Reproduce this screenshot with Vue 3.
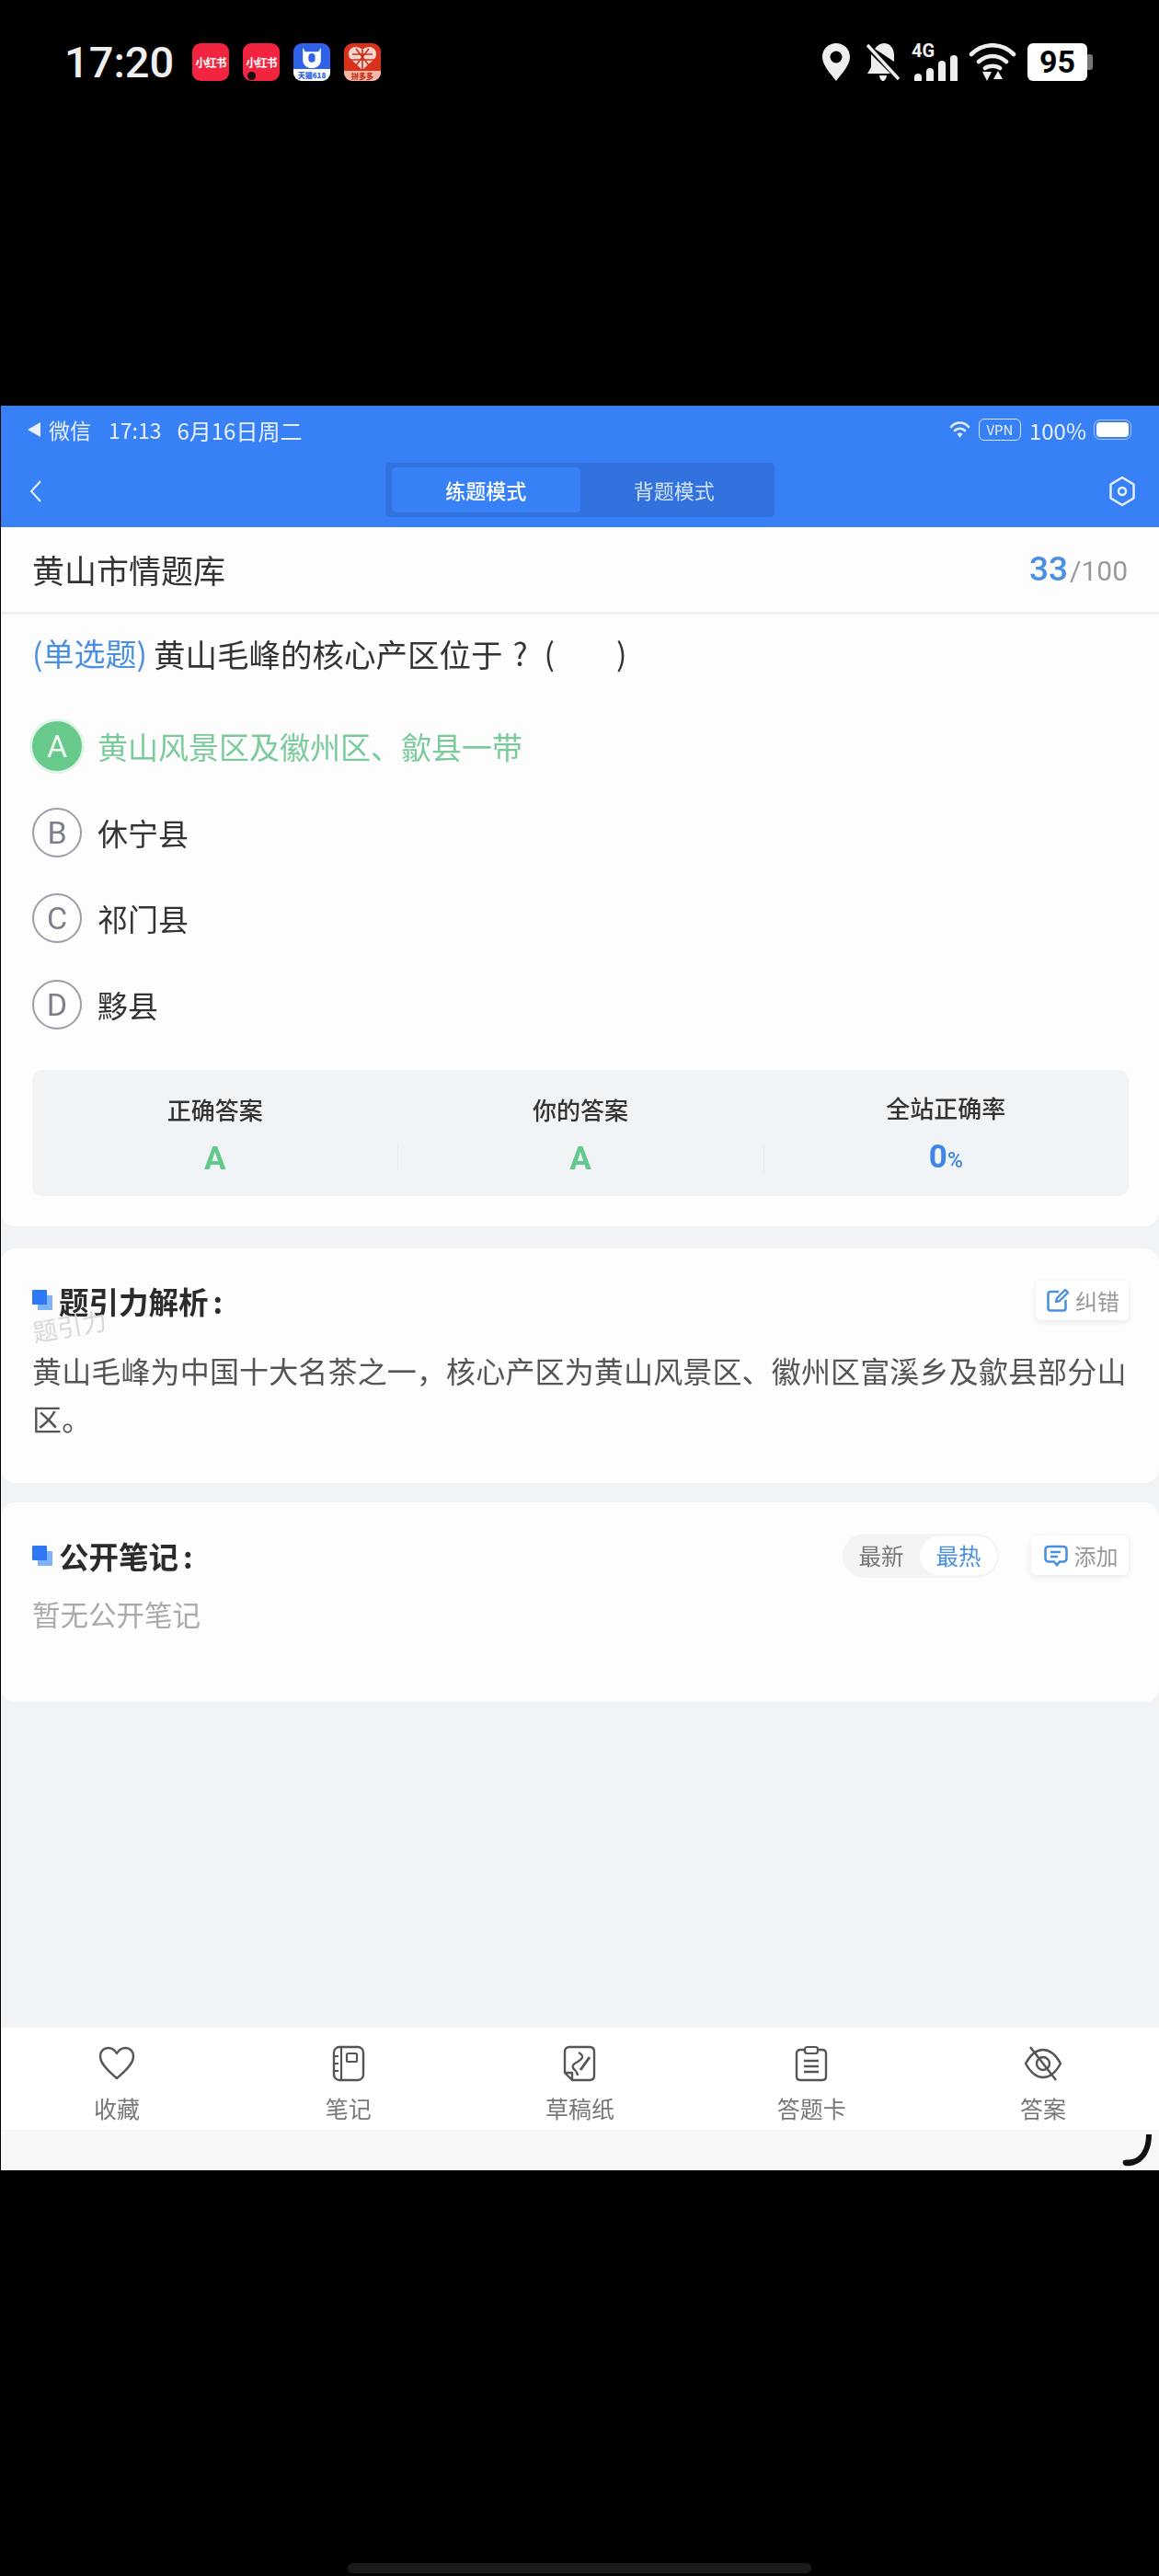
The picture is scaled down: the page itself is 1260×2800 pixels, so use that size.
<script setup>
const options = [
  { key: 'A', text: '黄山风景区及徽州区、歙县一带', right: true },
  { key: 'B', text: '休宁县' },
  { key: 'C', text: '祁门县' },
  { key: 'D', text: '黟县' },
]
</script>

<template>
  <div class="page">
    <!-- phone status bar -->
    <div class="phone-bar">
      <span class="phone-time">17:20</span>
      <div class="app-icon app-icon--red"><span>小红书</span></div>
      <div class="app-icon app-icon--red">
        <span>小红书</span>
        <i class="app-dot"></i>
      </div>
      <div class="app-icon app-icon--blue">
        <svg width="40" height="28" viewBox="0 0 40 28">
          <path d="M9 2 L12 7 H28 L31 2 V17 C31 23 26 27 20 27 C14 27 9 23 9 17Z" fill="#fff" />
          <rect x="16" y="9" width="8" height="11" rx="4" fill="#2f62e8" />
        </svg>
        <b>天猫618</b>
      </div>
      <div class="app-icon app-icon--pdd">
        <svg width="32" height="27" viewBox="0 0 32 27">
          <path d="M16 26 L3 14 C-1 9 1 2 8 1 C11 1 14 2 16 4 C18 2 21 1 24 1 C31 2 33 9 29 14Z" fill="#f6d6cc" />
          <path d="M16 4 V26 M5 9 L27 9 M3 15 L29 15 M9 3 L23 21 M23 3 L9 21" stroke="#c9301c" stroke-width="1.6" fill="none" />
        </svg>
        <b>拼多多</b>
      </div>

      <div class="phone-right">
        <svg width="30" height="41" viewBox="0 0 30 41">
          <path fill-rule="evenodd" fill="#eee" d="M15 0 C23.5 0 30 6.5 30 15 C30 24 21 33 15 41 C9 33 0 24 0 15 C0 6.5 6.5 0 15 0Z M15 8.5 A6.5 6.5 0 1 0 15 21.5 A6.5 6.5 0 1 0 15 8.5Z" />
        </svg>
        <svg class="ic-bell" width="38" height="41" viewBox="0 0 38 41">
          <path fill="#eee" d="M10 6 C13 2 16 0 20 0 C27 0 31 6 31 13 V20 Z M6 12 L27 33 H2 L6 26Z M15 35 H23 C22.5 38.5 21 41 19 41 C17 41 15.5 38.5 15 35Z" />
          <path stroke="#eee" stroke-width="3.4" d="M2 2 L36 39" />
        </svg>
        <div class="signal">
          <span class="signal-4g">4G</span>
          <div class="signal-bars">
            <i style="height: 8px"></i><i style="height: 14px"></i><i style="height: 22px"></i><i style="height: 28px"></i>
          </div>
        </div>
        <svg width="52" height="41" viewBox="0 0 52 41">
          <path d="M3 12 C16 -1 36 -1 49 12 M11 20 C20 12 32 12 41 20 M18 27 C22 24 30 24 34 27" fill="none" stroke="#eee" stroke-width="4.6" stroke-linecap="round" />
          <path d="M15 31 H25 L20 41Z M32 30 L37 39 H27Z" fill="#eee" />
        </svg>
        <div class="battery"><span>95</span></div>
      </div>
    </div>

    <div class="screen">
      <div class="top-blue">
        <div class="wx-bar">
          <span class="wx-back"></span>
          <span class="wx-name">微信</span>
          <span class="wx-time">17:13</span>
          <span class="wx-date">6月16日周二</span>
          <div class="wx-right">
            <svg width="23" height="20" viewBox="0 0 23 20">
              <path d="M2 7 C7 1 16 1 21 7 M6 11 C9 8 14 8 17 11" fill="none" stroke="#e6eefc" stroke-width="2.6" stroke-linecap="round" />
              <path d="M8.5 14.5 C10.5 13 12.5 13 14.5 14.5 L11.5 19Z" fill="#e6eefc" />
            </svg>
            <span class="vpn">VPN</span>
            <span class="wx-batt-text">100%</span>
            <span class="wx-batt"><i></i></span>
          </div>
        </div>
        <div class="nav-bar">
          <svg class="nav-back" width="14" height="24" viewBox="0 0 14 24">
            <path d="M12 1 L2 12 L12 23" fill="none" stroke="#e8f0fe" stroke-width="2" />
          </svg>
          <div class="mode-switch">
            <span class="mode-item mode-item--on">练题模式</span>
            <span class="mode-item">背题模式</span>
          </div>
          <svg class="nav-set" width="30" height="34" viewBox="0 0 30 34">
            <path d="M15 2 L27.5 9.5 V24.5 L15 32 L2.5 24.5 V9.5Z" fill="none" stroke="#e8f0fe" stroke-width="2.4" stroke-linejoin="round" />
            <circle cx="15" cy="17" r="4" fill="none" stroke="#e8f0fe" stroke-width="2.4" />
          </svg>
        </div>
      </div>

      <div class="subject">
        <span class="subject-name">黄山市情题库</span>
        <span class="subject-count"><b>33</b>/100</span>
      </div>

      <section class="card card--question">
        <p class="question">
          <span class="question-type">(单选题)</span>
          <span class="question-text">黄山毛峰的核心产区位于</span>
          <span class="question-mark">?</span>
          <span class="question-blank">(</span>
          <span class="question-end">)</span>
        </p>
        <div class="options">
          <div v-for="o in options" :key="o.key" class="option" :class="{ 'option--right': o.right }">
            <span class="option-key">{{ o.key }}</span>
            <span class="option-text">{{ o.text }}</span>
          </div>
        </div>
        <div class="stats">
          <div class="stat">
            <span class="stat-label">正确答案</span>
            <span class="stat-value stat-value--green">A</span>
          </div>
          <div class="stat stat--line">
            <span class="stat-label">你的答案</span>
            <span class="stat-value stat-value--green">A</span>
          </div>
          <div class="stat stat--line">
            <span class="stat-label">全站正确率</span>
            <span class="stat-value stat-value--blue">0<small>%</small></span>
          </div>
        </div>
      </section>

      <section class="card card--analysis">
        <div class="card-head card-head--a">
          <h3 class="card-title"><i class="title-mark"></i>题引力解析<span class="title-colon">:</span></h3>
          <button class="mini-btn">
            <svg width="24" height="26" viewBox="0 0 24 26">
              <path d="M13 4 H4 C2.5 4 1.5 5 1.5 6.5 V22 C1.5 23.5 2.5 24.5 4 24.5 H18 C19.5 24.5 20.5 23.5 20.5 22 V13" fill="none" stroke="#4a90e2" stroke-width="2.6" />
              <path d="M10 15 L11 11 L20 2 L23 5 L14 14Z" fill="none" stroke="#4a90e2" stroke-width="2.4" stroke-linejoin="round" />
            </svg>
            纠错
          </button>
        </div>
        <span class="watermark">题引力</span>
        <p class="analysis">黄山毛峰为中国十大名茶之一，核心产区为黄山风景区、徽州区富溪乡及歙县部分山区。</p>
      </section>

      <section class="card card--notes">
        <div class="card-head card-head--b">
          <h3 class="card-title"><i class="title-mark"></i>公开笔记<span class="title-colon">:</span></h3>
          <div class="sort">
            <span class="sort-item">最新</span>
            <span class="sort-item sort-item--on">最热</span>
          </div>
          <button class="mini-btn mini-btn--add">
            <svg width="26" height="24" viewBox="0 0 26 24">
              <path d="M5 2 H21 C23 2 24.5 3.5 24.5 5.5 V15 C24.5 17 23 18.5 21 18.5 H17 L14 22 L11 18.5 H5 C3 18.5 1.5 17 1.5 15 V5.5 C1.5 3.5 3 2 5 2Z" fill="none" stroke="#4a90e2" stroke-width="2.6" />
              <path d="M7 8 H18 M7 13 H15" stroke="#4a90e2" stroke-width="2.4" />
            </svg>
            添加
          </button>
        </div>
        <p class="no-notes">暂无公开笔记</p>
      </section>

      <div class="filler"></div>

      <div class="tabs">
        <div class="tab">
          <svg width="40" height="38" viewBox="0 0 40 38">
            <path d="M20 35 C8 25 2 18 2 11 C2 5.5 6 2 10.5 2 C14.5 2 18 4.5 20 8 C22 4.5 25.5 2 29.5 2 C34 2 38 5.5 38 11 C38 18 32 25 20 35Z" fill="none" stroke="#555" stroke-width="2.4" stroke-linejoin="round" />
          </svg>
          <span>收藏</span>
        </div>
        <div class="tab">
          <svg width="36" height="40" viewBox="0 0 36 40">
            <rect x="2" y="2" width="32" height="36" rx="6" fill="none" stroke="#555" stroke-width="2.4" />
            <path d="M10 3 V37 M2 12 H7 M2 20 H7 M2 28 H7" fill="none" stroke="#555" stroke-width="2.2" />
            <rect x="16" y="9" width="11" height="9" rx="1.5" fill="none" stroke="#555" stroke-width="2.2" />
          </svg>
          <span>笔记</span>
        </div>
        <div class="tab">
          <svg width="36" height="40" viewBox="0 0 36 40">
            <path d="M7 2 H29 C32 2 34 4 34 7 V33 C34 36 32 38 29 38 H10 L2 30 V7 C2 4 4 2 7 2Z M2 30 H10 V38" fill="none" stroke="#555" stroke-width="2.4" stroke-linejoin="round" />
            <path d="M17 8 C24 12 21 15 16 18 C10 21 9 24 13 27 C15 29 16 30 16 33" fill="none" stroke="#555" stroke-width="2.2" />
            <path d="M19 27 L29 13" fill="none" stroke="#555" stroke-width="3" />
          </svg>
          <span>草稿纸</span>
        </div>
        <div class="tab">
          <svg width="36" height="40" viewBox="0 0 36 40">
            <path d="M11 5 H6 C3.5 5 2 6.5 2 9 V34 C2 36.5 3.5 38 6 38 H30 C32.5 38 34 36.5 34 34 V9 C34 6.5 32.5 5 30 5 H25" fill="none" stroke="#555" stroke-width="2.4" />
            <rect x="11" y="2" width="14" height="7" rx="2.5" fill="none" stroke="#555" stroke-width="2.2" />
            <path d="M10 17 H26 M10 23 H26 M10 29 H26" stroke="#555" stroke-width="2.4" />
          </svg>
          <span>答题卡</span>
        </div>
        <div class="tab">
          <svg width="44" height="40" viewBox="0 0 44 40">
            <path d="M3 20 C9 9 15 5 22 5 C29 5 35 9 41 20 C35 31 29 35 22 35 C15 35 9 31 3 20Z" fill="none" stroke="#555" stroke-width="2.4" />
            <circle cx="22" cy="20" r="7" fill="none" stroke="#555" stroke-width="2.4" />
            <path d="M8 2 L36 38" stroke="#555" stroke-width="2.4" />
          </svg>
          <span>答案</span>
        </div>
      </div>
      <div class="tabs-foot">
        <svg class="foot-mark" width="34" height="36" viewBox="0 0 34 36">
          <path d="M27 1 C27 12 24 22 15 27 C10 29 6 28 3 29 C1 30 1 34 4 35 C16 37 33 28 33 1Z" fill="#111" />
        </svg>
      </div>
    </div>

    <div class="home-bar"></div>
  </div>
</template>

<style scoped>
.page {
  height: 2800px;
  background: #000;
  display: flex;
  flex-direction: column;
  font-family: "Noto Sans CJK SC", "Noto Sans", sans-serif;
  overflow: hidden;
}

p, h3 {
  margin: 0;
}

/* phone status bar */
.phone-bar {
  height: 441px;
  box-sizing: border-box;
  padding: 47px 78px 0 70px;
  display: flex;
  align-items: flex-start;
  flex-shrink: 0;
}

.phone-time {
  font-family: Roboto, sans-serif;
  font-size: 47px;
  font-weight: 500;
  line-height: 41px;
  color: #eee;
  width: 139px;
  flex-shrink: 0;
}

.app-icon {
  width: 40px;
  height: 41px;
  border-radius: 9px;
  margin-right: 15px;
  flex-shrink: 0;
  position: relative;
  overflow: hidden;
  display: flex;
  flex-direction: column;
  align-items: center;
  justify-content: center;
  color: #fff;
  font-size: 12px;
  font-weight: 700;
  white-space: nowrap;
}

.app-icon--red {
  background: #f2243f;
}

.app-icon--red span {
  letter-spacing: -1px;
}

.app-dot {
  position: absolute;
  left: 5px;
  bottom: 1px;
  width: 9px;
  height: 9px;
  border-radius: 50%;
  background: #111;
}

.app-icon--blue {
  background: #2f62e8;
  justify-content: flex-start;
  padding-top: 3px;
  box-sizing: border-box;
}

.app-icon--blue svg {
  height: 25px;
}

.app-icon--blue b {
  width: 100%;
  background: #fff;
  color: #2f62e8;
  font-size: 8px;
  line-height: 13px;
  text-align: center;
}

.app-icon--pdd {
  background: #d8321d;
  justify-content: flex-start;
  padding-top: 3px;
  box-sizing: border-box;
}

.app-icon--pdd b {
  width: 100%;
  background: #f4b8a6;
  color: #c9301c;
  font-size: 8px;
  line-height: 11px;
  text-align: center;
}

.phone-right {
  margin-left: auto;
  display: flex;
  align-items: flex-start;
  gap: 12px;
}

.ic-bell {
  margin-left: 5px;
}

.signal {
  width: 50px;
  height: 41px;
  position: relative;
}

.signal-4g {
  position: absolute;
  left: 0;
  top: -1px;
  font-family: Roboto, sans-serif;
  font-weight: 700;
  font-size: 20px;
  line-height: 18px;
  color: #eee;
}

.signal-bars {
  position: absolute;
  left: 3px;
  right: 0;
  bottom: 0;
  display: flex;
  align-items: flex-end;
  gap: 5px;
}

.signal-bars i {
  width: 8px;
  border-radius: 4px 4px 0 0;
  background: #eee;
}

.battery {
  width: 65px;
  height: 41px;
  background: #fff;
  border-radius: 6px;
  position: relative;
  text-align: center;
  font-family: Roboto, sans-serif;
  font-weight: 700;
  font-size: 34px;
  line-height: 41px;
  color: #000;
}

.battery::after {
  content: "";
  position: absolute;
  right: -6px;
  top: 12px;
  width: 6px;
  height: 17px;
  border-radius: 0 3px 3px 0;
  background: #777;
}

/* app */
.screen {
  height: 1918px;
  flex-shrink: 0;
  margin-left: 1px;
  background: #f1f4f7;
  display: flex;
  flex-direction: column;
  position: relative;
  filter: blur(0.4px);
}

.top-blue {
  background: #3880f5;
  color: #e8f0fe;
  height: 132px;
}

.wx-bar {
  height: 52px;
  margin-bottom: 2px;
  display: flex;
  align-items: center;
  font-size: 23px;
  padding: 0 30px 0 29px;
}

.wx-back {
  width: 0;
  height: 0;
  border: 8px solid transparent;
  border-left: 0;
  border-right: 14px solid #e8f0fe;
  margin-right: 9px;
}

.wx-time {
  margin-left: 19px;
}

.wx-date {
  margin-left: 17px;
  font-size: 24px;
}

.wx-right {
  margin-left: auto;
  display: flex;
  align-items: center;
}

.vpn {
  margin-left: 9px;
  border: 1.5px solid #d6e4fc;
  border-radius: 6px;
  width: 46px;
  box-sizing: border-box;
  height: 24px;
  font-size: 15px;
  line-height: 21px;
  text-align: center;
}

.wx-batt-text {
  margin-left: 9px;
  font-size: 24px;
}

.wx-batt {
  margin-left: 8px;
  width: 41px;
  height: 22px;
  box-sizing: border-box;
  border: 1.5px solid #a8c8fb;
  border-radius: 7px;
  padding: 2px;
  display: flex;
}

.wx-batt i {
  flex: 1;
  background: #fff;
  border-radius: 4px;
}

.nav-bar {
  height: 78px;
  position: relative;
  display: flex;
  justify-content: center;
  align-items: center;
}

.nav-back {
  position: absolute;
  left: 31px;
  top: 27px;
}

.nav-set {
  position: absolute;
  right: 25px;
  top: 22px;
}

.mode-switch {
  width: 423px;
  height: 59px;
  box-sizing: border-box;
  padding: 5px 7px;
  margin-top: -3px;
  background: #3272de;
  border-radius: 5px;
  display: flex;
}

.mode-item {
  width: 205px;
  font-size: 22px;
  line-height: 49px;
  text-align: center;
  color: #d3e2fb;
}

.mode-item--on {
  background: #3880f5;
  border-radius: 5px;
  color: #fff;
  font-weight: 500;
}

.subject {
  height: 95px;
  box-sizing: border-box;
  background: #fdfdfd;
  border-bottom: 3px solid #f0f1f3;
  padding: 0 34px 1px 34px;
  display: flex;
  align-items: center;
  justify-content: space-between;
}

.subject-name {
  font-size: 35px;
  color: #333;
}

.subject-count {
  font-family: Roboto, sans-serif;
  font-size: 30px;
  color: #999;
}

.subject-count b {
  font-weight: 500;
  font-size: 37px;
  margin-right: 2px;
  color: #4a90e2;
}

.card {
  background: #fdfdfd;
  border-radius: 16px;
  padding: 0 33px 0 34px;
  position: relative;
}

.card--question {
  border-radius: 0 0 16px 16px;
  padding-top: 18px;
  padding-bottom: 33px;
}

.question {
  font-size: 34px;
  line-height: 48px;
  height: 48px;
  margin-bottom: 30px;
  color: #333;
  white-space: nowrap;
  display: flex;
}

.question-type {
  color: #4a90e2;
}

.question-text {
  margin-left: 7px;
  font-size: 34.5px;
}

.question-mark {
  margin-left: 11px;
}

.question-blank {
  margin-left: 18px;
}

.question-end {
  margin-left: 67px;
}

.option {
  height: 93.7px;
  display: flex;
  align-items: center;
  gap: 17px;
  color: #333;
  font-size: 33px;
}

.option-key {
  width: 54px;
  height: 54px;
  box-sizing: border-box;
  border: 2px solid #9a9ea6;
  border-radius: 50%;
  font-family: Roboto, sans-serif;
  font-size: 34px;
  line-height: 50px;
  text-align: center;
  color: #7b8089;
}

.option--right {
  color: #7acb9b;
}

.option--right .option-key {
  background: #67c98a;
  border-color: #67c98a;
  box-shadow: 0 0 0 3px #e2f5e9;
  color: #f0faf3;
}

.stats {
  margin-top: 24px;
  height: 137px;
  background: #f1f4f7;
  border-radius: 10px;
  display: grid;
  grid-template-columns: repeat(3, 1fr);
  align-items: center;
}

.stat {
  display: flex;
  flex-direction: column;
  align-items: center;
  gap: 16px;
  padding-top: 8px;
  position: relative;
}

.stat--line::before {
  content: "";
  position: absolute;
  left: 0;
  bottom: 8px;
  height: 30px;
  width: 1px;
  background: #e9ecef;
}

.stat-label {
  font-size: 26px;
  line-height: 34px;
  font-weight: 500;
  color: #333;
}

.stat-value {
  font-family: Roboto, sans-serif;
  font-size: 35px;
  line-height: 42px;
  font-weight: 700;
}

.stat-value small {
  font-size: 23px;
  font-weight: 500;
}

.stat-value--green {
  color: #62c98a;
}

.stat-value--blue {
  color: #3f86e6;
}

.card--analysis {
  margin-top: 24px;
  height: 255px;
  box-sizing: border-box;
  padding-top: 35px;
}

.card--notes {
  margin-top: 21px;
  height: 217px;
  box-sizing: border-box;
  padding-top: 34px;
}

.card-head {
  display: flex;
  align-items: center;
}

.card-head--a {
  height: 43px;
}

.card-head--b {
  height: 48px;
}

.card-title {
  font-size: 32.5px;
  font-weight: 700;
  color: #2b2b2b;
  display: flex;
  align-items: center;
  margin-right: auto;
}

.title-colon {
  margin-left: 5px;
}

.title-mark {
  width: 22px;
  height: 22px;
  margin-right: 7px;
  position: relative;
  background: linear-gradient(#7fb2fb, #7fb2fb) 6px 6px / 16px 16px no-repeat;
}

.title-mark::before {
  content: "";
  position: absolute;
  left: 0;
  top: 0;
  width: 16px;
  height: 16px;
  background: #2f78f3;
  border-radius: 1px;
}

.mini-btn {
  height: 43px;
  box-sizing: border-box;
  width: 101px;
  border: 0;
  padding: 0 0 0 2px;
  border-radius: 6px;
  background: #fff;
  box-shadow: 0 2px 7px rgba(0, 0, 0, 0.09);
  display: flex;
  align-items: center;
  justify-content: center;
  gap: 7px;
  font-family: inherit;
  font-size: 24px;
  color: #999;
}

.mini-btn--add {
  width: 106px;
  margin-left: 35px;
}

.watermark {
  position: absolute;
  left: 34px;
  top: 69px;
  font-size: 27px;
  line-height: 30px;
  color: #d8d8d8;
  transform: rotate(-10deg);
}

.analysis {
  margin-top: 28px;
  font-size: 32px;
  letter-spacing: 0.15px;
  line-height: 52px;
  color: #555;
}

.sort {
  width: 170px;
  height: 48px;
  box-sizing: border-box;
  border-radius: 24px;
  background: #f4f4f4;
  padding: 3px 2px 3px 0;
  display: flex;
  font-size: 24.5px;
}

.sort-item {
  flex: 1;
  text-align: center;
  line-height: 42px;
  color: #777;
}

.sort-item--on {
  background: #fff;
  border-radius: 21px;
  color: #4a90e2;
}

.no-notes {
  margin-top: 17px;
  font-size: 30.5px;
  line-height: 44px;
  color: #aaa;
}

.filler {
  flex: 1;
}

.tabs {
  height: 111px;
  flex-shrink: 0;
  background: #fff;
  display: grid;
  grid-template-columns: repeat(5, 1fr);
}

.tab {
  display: flex;
  flex-direction: column;
  align-items: center;
  padding-top: 19px;
  box-sizing: border-box;
  font-size: 25px;
  line-height: 36px;
  color: #777;
}

.tab svg {
  height: 40px;
  margin-bottom: 10px;
}

.tabs-foot {
  height: 44px;
  flex-shrink: 0;
  background: #f8f8f8;
  position: relative;
}

.foot-mark {
  position: absolute;
  right: 7px;
  top: 4px;
}

.home-bar {
  width: 504px;
  height: 11px;
  flex-shrink: 0;
  margin: 427px auto 0;
  border-radius: 5px;
  background: #1a1a1a;
}
</style>
